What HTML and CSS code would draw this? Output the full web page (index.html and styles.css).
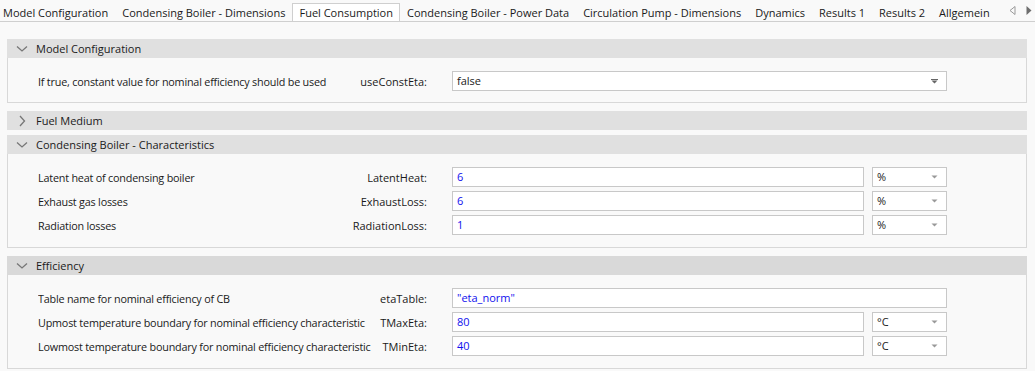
FILE: index.html
```html
<!DOCTYPE html>
<html lang="en">
<head>
  <meta charset="UTF-8">
  <meta name="viewport" content="width=device-width, initial-scale=1.0">
  <title>Fuel Consumption</title>
  <link rel="stylesheet" href="styles.css">
</head>
<body>
  <div class="tab-bar">
    <div class="tabs">
      <div class="tab">Model Configuration</div>
      <div class="tab">Condensing Boiler - Dimensions</div>
      <div class="tab active">Fuel Consumption</div>
      <div class="tab">Condensing Boiler - Power Data</div>
      <div class="tab">Circulation Pump - Dimensions</div>
      <div class="tab">Dynamics</div>
      <div class="tab">Results 1</div>
      <div class="tab">Results 2</div>
      <div class="tab">Allgemein</div>
    </div>
    <div class="tab-scroll">
      <svg width="7" height="9" viewBox="0 0 7 9"><path d="M6 0.5 L1 4.5 L6 8.5 Z" fill="none" stroke="#9a9a9a" stroke-width="1"/></svg>
      <svg width="6" height="9" viewBox="0 0 6 9"><path d="M0.5 0 L5.5 4.5 L0.5 9 Z" fill="#6e6e6e"/></svg>
    </div>
  </div>

  <div class="content">
    <!-- Model Configuration -->
    <div class="group">
      <div class="group-header">
        <svg class="chevron" width="12" height="8" viewBox="0 0 12 8"><path d="M1 1.5 L6 6 L11 1.5" fill="none" stroke="#777" stroke-width="1.3"/></svg>
        <span>Model Configuration</span>
      </div>
      <div class="group-body short">
        <div class="row">
          <div class="labels">
            <span class="desc">If true, constant value for nominal efficiency should be used</span>
            <span class="name">useConstEta:</span>
          </div>
          <div class="field">
            <div class="select wide">
              <span class="plain">false</span>
              <svg class="drop" width="7" height="5" viewBox="0 0 7 5"><path d="M0 0 H7 V1 H0 Z M0.5 1.5 H6.5 L3.5 4.5 Z" fill="#666"/></svg>
            </div>
          </div>
        </div>
      </div>
    </div>

    <!-- Fuel Medium -->
    <div class="group">
      <div class="group-header">
        <svg class="chevron" width="12" height="12" viewBox="0 0 12 12"><path d="M4 1 L8.5 6 L4 11" fill="none" stroke="#777" stroke-width="1.3"/></svg>
        <span>Fuel Medium</span>
      </div>
    </div>

    <!-- Condensing Boiler - Characteristics -->
    <div class="group">
      <div class="group-header">
        <svg class="chevron" width="12" height="8" viewBox="0 0 12 8"><path d="M1 1.5 L6 6 L11 1.5" fill="none" stroke="#777" stroke-width="1.3"/></svg>
        <span>Condensing Boiler - Characteristics</span>
      </div>
      <div class="group-body">
        <div class="row">
          <div class="labels">
            <span class="desc">Latent heat of condensing boiler</span>
            <span class="name">LatentHeat:</span>
          </div>
          <div class="field">
            <div class="input">6</div>
            <div class="select unit">
              <span class="plain">%</span>
              <svg class="drop" width="7" height="4" viewBox="0 0 7 4"><path d="M0.5 0.5 H6.5 L3.5 3.5 Z" fill="#999"/></svg>
            </div>
          </div>
        </div>
        <div class="row">
          <div class="labels">
            <span class="desc">Exhaust gas losses</span>
            <span class="name">ExhaustLoss:</span>
          </div>
          <div class="field">
            <div class="input">6</div>
            <div class="select unit">
              <span class="plain">%</span>
              <svg class="drop" width="7" height="4" viewBox="0 0 7 4"><path d="M0.5 0.5 H6.5 L3.5 3.5 Z" fill="#999"/></svg>
            </div>
          </div>
        </div>
        <div class="row">
          <div class="labels">
            <span class="desc">Radiation losses</span>
            <span class="name">RadiationLoss:</span>
          </div>
          <div class="field">
            <div class="input">1</div>
            <div class="select unit">
              <span class="plain">%</span>
              <svg class="drop" width="7" height="4" viewBox="0 0 7 4"><path d="M0.5 0.5 H6.5 L3.5 3.5 Z" fill="#999"/></svg>
            </div>
          </div>
        </div>
      </div>
    </div>

    <!-- Efficiency -->
    <div class="group">
      <div class="group-header hover">
        <svg class="chevron" width="12" height="8" viewBox="0 0 12 8"><path d="M1 1.5 L6 6 L11 1.5" fill="none" stroke="#777" stroke-width="1.3"/></svg>
        <span>Efficiency</span>
      </div>
      <div class="group-body">
        <div class="row">
          <div class="labels">
            <span class="desc">Table name for nominal efficiency of CB</span>
            <span class="name">etaTable:</span>
          </div>
          <div class="field">
            <div class="input">"eta_norm"</div>
          </div>
        </div>
        <div class="row">
          <div class="labels">
            <span class="desc">Upmost temperature boundary for nominal efficiency characteristic</span>
            <span class="name">TMaxEta:</span>
          </div>
          <div class="field">
            <div class="input">80</div>
            <div class="select unit">
              <span class="plain">°C</span>
              <svg class="drop" width="7" height="4" viewBox="0 0 7 4"><path d="M0.5 0.5 H6.5 L3.5 3.5 Z" fill="#999"/></svg>
            </div>
          </div>
        </div>
        <div class="row">
          <div class="labels">
            <span class="desc">Lowmost temperature boundary for nominal efficiency characteristic</span>
            <span class="name">TMinEta:</span>
          </div>
          <div class="field">
            <div class="input">40</div>
            <div class="select unit">
              <span class="plain">°C</span>
              <svg class="drop" width="7" height="4" viewBox="0 0 7 4"><path d="M0.5 0.5 H6.5 L3.5 3.5 Z" fill="#999"/></svg>
            </div>
          </div>
        </div>
      </div>
    </div>
  </div>
</body>
</html>
```

FILE: styles.css
```css
body {
  margin: 0;
  padding: 0;
  font-family: "Open Sans", "Noto Sans", sans-serif;
  font-size: 11px;
  color: #1a1a1a;
  background-color: #f9f9f9;
  overflow: hidden;
}

.tab-bar {
  display: flex;
  height: 21px;
  border-bottom: 1px solid #cfcfcf;
  background-color: #f9f9f9;
}

.tabs {
  display: flex;
  flex: 1;
  margin-left: -4px;
  overflow: hidden;
}

.tab {
  height: 18px;
  margin-top: 3px;
  padding: 0 6px;
  line-height: 18px;
  white-space: nowrap;
  border: 1px solid transparent;
  border-bottom: none;
}

.tab.active {
  background-color: #fff;
  border-color: #cfcfcf;
  height: 19px;
  margin-bottom: -1px;
}

.tab-scroll {
  display: flex;
  align-items: center;
  gap: 10px;
  padding: 0 3px 0 10px;
}

.content {
  display: flex;
  flex-direction: column;
  gap: 5px;
  padding: 17px 8px 0 7px;
}

.group-header {
  display: flex;
  align-items: center;
  height: 19px;
  background-color: #e0e0e0;
}

.group-header.hover {
  background-color: #d9d9d9;
}

.chevron {
  margin-left: 9px;
  width: 12px;
  flex: none;
}

.group-header span {
  margin-left: 8px;
}

.group-body {
  display: flex;
  flex-direction: column;
  gap: 4px;
  padding: 13px 0 12px 30px;
  margin-bottom: 3px;
  border: 1px solid #d8d8d8;
  border-top: none;
  background-color: #f9f9f9;
}

.group-body.short {
  padding-bottom: 11px;
}

.row {
  display: flex;
  align-items: center;
  height: 20px;
}

.labels {
  display: flex;
  width: 389px;
  flex: none;
  white-space: nowrap;
}

.desc {
  flex: 1;
  min-width: 0;
  overflow: hidden;
  text-overflow: ellipsis;
  font-size: 10.8px;
  letter-spacing: -0.2px;
}

.name {
  flex: none;
  text-align: right;
}

.field {
  display: flex;
  gap: 8px;
  width: 495px;
  margin-left: 25px;
}

.input,
.select {
  box-sizing: border-box;
  height: 20px;
  line-height: 18px;
  padding: 0 4px;
  border: 1px solid #c8c8c8;
  background-color: #fff;
  white-space: nowrap;
}

.input {
  flex: 1;
  color: #1010ee;
}

.select {
  display: flex;
  align-items: center;
  justify-content: space-between;
}

.select.wide {
  flex: 1;
}

.select.unit {
  width: 75px;
  flex: none;
}

.plain {
  color: #1a1a1a;
}

.drop {
  margin-right: 4px;
}
```
